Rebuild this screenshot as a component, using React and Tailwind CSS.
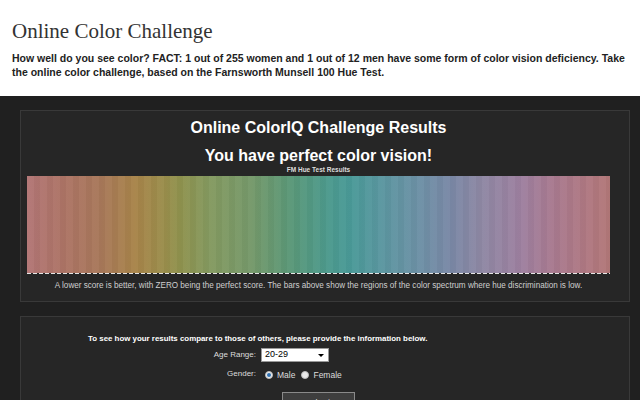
export default function App() {
  return (
    <div className="min-h-screen bg-white font-['Liberation_Sans',Arial,sans-serif]">
      <header className="px-3 pt-[21px] pb-[17px]">
        <h1 className="font-['Liberation_Serif','Times_New_Roman',serif] text-[21px] leading-[21px] text-[#333]">
          Online Color Challenge
        </h1>
        <p className="mt-[9px] text-[10.5px] font-bold leading-[14px] text-[#222]">
          How well do you see color? FACT: 1 out of 255 women and 1 out of 12 men have some form of color vision
          deficiency. Take the online color challenge, based on the Farnsworth Munsell 100 Hue Test.
        </p>
      </header>

      <main className="bg-[#202020] pt-[14px] pb-[40px]">
        <Results />
        <Survey />
      </main>
    </div>
  );
}

function Results() {
  return (
    <section className="ml-[20px] w-[610px] border border-[#393939] bg-[#262626] pl-[6px] pr-[19px] pt-[7px] pb-[10px] text-center text-white">
      <h2 className="text-[16px] font-bold leading-[20px]">Online ColorIQ Challenge Results</h2>
      <h3 className="mt-[8px] text-[16px] font-bold leading-[20px]">You have perfect color vision!</h3>
      <div className="text-[6.5px] font-bold leading-[8px] text-[#ddd]">FM Hue Test Results</div>
      <div className="mt-[2px] h-[97px] bg-[linear-gradient(to_right,#b27676_0%,#ad7466_6%,#a8785a_12.5%,#a8844a_18.5%,#9a8e4c_23.7%,#8f924e_26.3%,#849a60_31.4%,#76996a_38.3%,#5a9878_45.2%,#4c9a8e_52%,#4a9a98_55.5%,#5a97a0_60.6%,#6e90a6_67.5%,#7a88a6_72.7%,#8e88a4_77.8%,#9e80a0_84.7%,#a87a90_89.9%,#b07880_96.7%,#b27878_100%)]">
        <div className="h-full bg-[repeating-linear-gradient(to_right,rgba(255,255,255,0.025)_0_7px,rgba(0,0,0,0.025)_7px_13px)]" />
      </div>
      <div className="h-px bg-[repeating-linear-gradient(to_right,#e5e5e5_0_4px,transparent_4px_6px)]" />
      <p className="mt-[7px] text-[8.15px] leading-[10px] text-[#cfcfcf]">
        A lower score is better, with ZERO being the perfect score. The bars above show the regions of the color
        spectrum where hue discrimination is low.
      </p>
    </section>
  );
}

function Survey() {
  return (
    <section className="mt-[14px] ml-[20px] h-[110px] w-[610px] border border-[#393939] bg-[#262626] pt-[17px] text-[8px] text-[#ddd]">
      <div className="ml-[67px] w-[339px]">
        <p className="whitespace-nowrap text-center text-[7.9px] font-bold leading-[10px] text-white">
          To see how your results compare to those of others, please provide the information below.
        </p>
        <div className="mt-[4px] grid grid-cols-[168px_1fr] items-center gap-x-[5px] gap-y-[5px]">
          <span className="text-right">Age Range:</span>
          <div className="flex h-[14px] w-[68px] items-center justify-between border border-[#999] bg-white pl-[3px] pr-[4px] text-[9px] text-black">
            <span>20-29</span>
            <span className="h-0 w-0 border-x-[3px] border-t-[3px] border-x-transparent border-t-black" />
          </div>
          <span className="text-right">Gender:</span>
          <div className="flex items-center pl-[4px] pt-[2px] text-[8.5px]">
            <span className="flex h-[8px] w-[8px] items-center justify-center rounded-full border border-[#bbb] bg-[#eee]">
              <span className="h-[4px] w-[4px] rounded-full bg-[#2f6fb0]" />
            </span>
            <span className="ml-[4px]">Male</span>
            <span className="ml-[6px] h-[8px] w-[8px] rounded-full border border-[#bbb] bg-[#e8e8e8]" />
            <span className="ml-[4px]">Female</span>
          </div>
        </div>
        <div className="mt-[10px] ml-[194px]">
          <button className="h-[20px] w-[73px] border border-[#8a8a8a] bg-[#3e3e3e] pt-[3px] text-[9px] leading-[10px] text-[#ddd]">
            Submit
          </button>
        </div>
      </div>
    </section>
  );
}
